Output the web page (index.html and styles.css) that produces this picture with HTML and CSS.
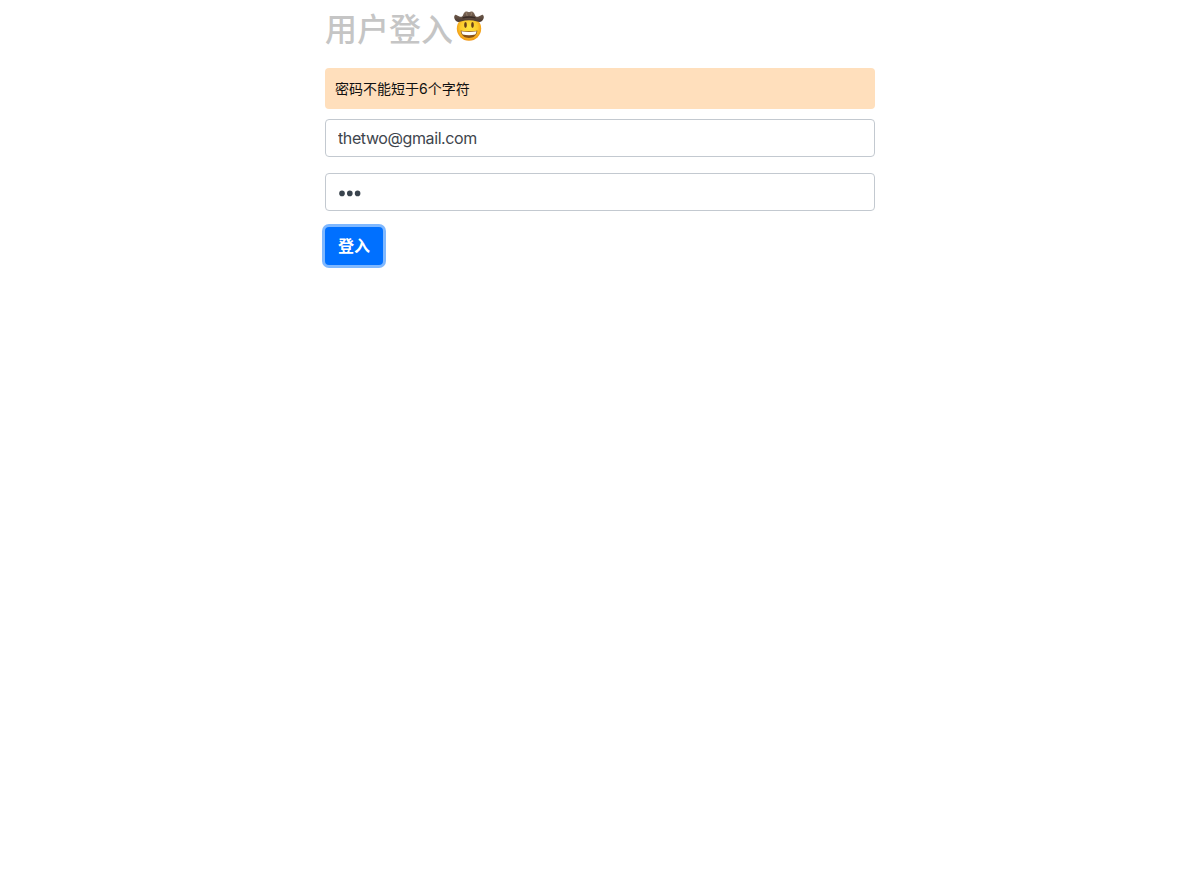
FILE: index.html
```html
<!DOCTYPE html>
<html lang="zh-CN">
<head>
<meta charset="utf-8">
<title>用户登入</title>
<link rel="stylesheet" href="styles.css">
</head>
<body>
<main class="container">
  <h1 class="title"><span class="title-text">用户登入</span><svg class="cowboy" viewBox="0 0 30 30" role="img" aria-label="cowboy">
    <defs>
      <radialGradient id="face" cx="50%" cy="45%" r="58%">
        <stop offset="0" stop-color="#ffe640"/><stop offset=".6" stop-color="#fdcb2b"/><stop offset="1" stop-color="#ee8c11"/>
      </radialGradient>
      <linearGradient id="hat" x1="0" y1="0" x2="0" y2="1">
        <stop offset="0" stop-color="#806b5a"/><stop offset="1" stop-color="#49382f"/>
      </linearGradient>
    </defs>
    <circle cx="15" cy="17.6" r="12.2" fill="url(#face)"/>
    <path d="M1 3.9C2.2 3.3 3.6 4.8 5.4 5.5 7 6 8.4 5.6 9 4.2 9.7 2.2 10.6.6 12.2.5c1.1-.1 1.7.6 2.8.6S16.7.4 17.8.5C19.4.6 20.3 2.2 21 4.2c.6 1.4 2 1.8 3.6 1.3C26.4 4.8 27.8 3.3 29 3.9c1.4 1.2 1 4.3-1 6.1-1.5 1.3-3 1.3-4.8.6C17.500 8.800 12.500 8.800 6.800 10.600 5 11.300 3.500 11.300 2 10 0 8.200-.4 5.100 1 3.900Z" fill="url(#hat)"/>
    <path d="M8.500 6.300c3.900-1.300 9.100-1.300 13 0v1.300c-4.100-1.200-8.900-1.200-13 0Z" fill="#382a24"/>
    <path d="M12.200 1.500l1 3.500M17.800 1.500l-1 3.500" stroke="#9a8570" stroke-width=".8" fill="none"/>
    <ellipse cx="11.5" cy="14" rx="1.35" ry="2.9" fill="#69401a"/>
    <ellipse cx="18.5" cy="14" rx="1.35" ry="2.9" fill="#69401a"/>
    <path d="M6.600 19.400c5 1.200 11.800 1.200 16.800 0-.5 4.800-3.700 7.500-8.400 7.500s-7.900-2.700-8.400-7.500Z" fill="#875016"/>
    <path d="M7.400 20.300c4.600.9 10.600.9 15.200 0-.2 1.400-.7 2.400-1.300 3.200-3.900.9-8.700.9-12.600 0-.6-.8-1.100-1.800-1.300-3.200Z" fill="#fff"/>
  </svg></h1>
  <div class="message">密码不能短于6个字符</div>
  <form class="login">
    <input class="field" type="text" value="thetwo@gmail.com">
    <div class="field password">
      <svg class="dots" viewBox="0 0 24 24"><circle cx="4" cy="13.400" r="2.800"/><circle cx="11.800" cy="13.400" r="2.800"/><circle cx="19.600" cy="13.400" r="2.800"/></svg>
    </div>
    <button class="submit" type="button">登入</button>
  </form>
</main>
</body>
</html>
```
FILE: styles.css
```css
* { box-sizing: border-box; }
body {
  margin: 0;
  background: #fff;
  font-family: Inter, "Noto Sans CJK SC", sans-serif;
}
.container { width: 550px; min-height: 895px; margin: 0 auto; padding-top: 10px; }
.title {
  display: flex;
  height: 38px;
  margin: 0 0 20px;
  color: #c5c5c5;
  font-size: 32px;
  font-weight: 500;
  line-height: 38px;
}
.title-text { padding-top: 1px; }
.cowboy { width: 30px; height: 30px; margin: 1px 0 0 1px; }
.message {
  height: 41px;
  margin-bottom: 10px;
  padding: 0 10px;
  border-radius: 4px;
  background: #ffdfbc;
  color: #111;
  font-size: 14px;
  line-height: 41px;
}
.login { display: flex; flex-direction: column; align-items: flex-start; gap: 16px; }
.field {
  display: block;
  width: 100%;
  height: 38px;
  padding: 6px 12px;
  border: 1px solid #c3c9d0;
  border-radius: 4px;
  outline: 0;
  background: #fff;
  color: #3e454d;
  font: 400 16px/24px Inter, sans-serif;
  letter-spacing: -0.4px;
}
.password { display: flex; }
.dots { width: 24px; height: 24px; fill: #3a444e; }
.submit {
  width: 58px;
  height: 38px;
  padding: 0 0 2px;
  border: 0;
  border-radius: 4px;
  box-shadow: 0 0 0 3px #7fb8ff;
  background: #0070ff;
  color: #fff;
  font: 700 16px/36px "Noto Sans CJK SC", sans-serif;
}
```
